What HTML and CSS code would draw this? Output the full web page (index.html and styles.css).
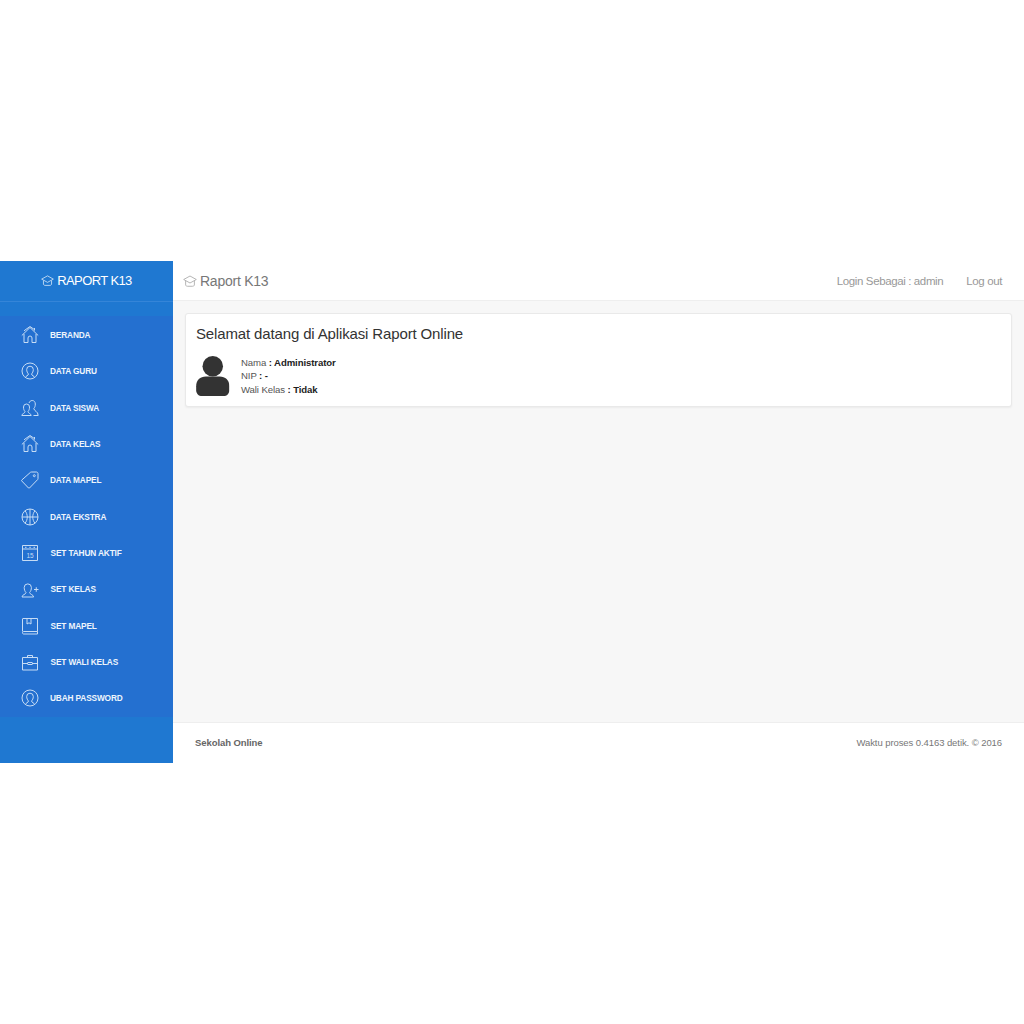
FILE: index.html
```html
<!DOCTYPE html>
<html lang="id">
<head>
<meta charset="utf-8">
<title>Raport K13</title>
<link rel="stylesheet" href="styles.css">
</head>
<body>
<svg class="defs" width="0" height="0" aria-hidden="true">
  <defs>
    <symbol id="cap" viewBox="0 0 16 16"><path d="M.8 6.300 8 2.300 15.200 6.300 8 10.300Z"/><path d="M3 8v4.500c0 .8 1 1.500 2 1.500h6c1 0 2-.7 2-1.500V8"/></symbol>
    <symbol id="home" viewBox="0 0 18 18"><path d="M.8 9.500 9 1.500l8.200 8"/><path d="M3 4.800 9 .5l5 3.500M13.500 2v2.500"/><path d="M3 8v8.500h4v-4.500a2 2 0 0 1 4 0v4.500h4V8"/></symbol>
    <symbol id="user" viewBox="0 0 18 18"><circle cx="9" cy="9" r="8"/><path d="M4.500 15.500c0-1.500 3-2 3-3.500-1-1-1.800-2.500-1.800-4.500a3.300 3.300 0 0 1 6.600 0c0 2-.8 3.500-1.800 4.500 0 1.500 3 2 3 3.500"/></symbol>
    <symbol id="users" viewBox="0 0 18 18"><path d="M.8 16.500c0-2 3.200-2 3.200-4-1-1-1.500-2.500-1.500-4.500a3 3 0 0 1 6 0c0 2-.5 3.500-1.500 4.500 0 2 3.200 2 3.200 4Z"/><path d="M8 4c.5-1.500 1.700-2.500 3.200-2.500 1.900 0 3.100 1.500 3.100 3.500s-.5 3.500-1.500 4.500c0 2.500 4.400 2.700 4.400 7h-4.700"/></symbol>
    <symbol id="tag" viewBox="0 0 18 18"><path d="M.8 10c-.3-.3-.3-.7 0-1L9.500 1.300c.3-.3.500-.3.800-.3h5.200c.8 0 1.500.7 1.500 1.500v5.200c0 .3 0 .5-.3.800L8.500 17c-.3.300-.7.300-1 0Z"/><circle cx="13.300" cy="4.700" r="1"/></symbol>
    <symbol id="ball" viewBox="0 0 18 18"><circle cx="9" cy="9" r="8"/><path d="M1 9h16M9 1v16M4 2.800C7 6 7 12 4 15.200M14 2.800C11 6 11 12 14 15.200"/></symbol>
    <symbol id="cal" viewBox="0 0 18 18"><path d="M1.500 1.500h15v15h-15ZM1.500 5h15"/><path d="M4 3.300h1.500M8.300 3.300h1.500M12.500 3.300h1.500"/><text x="9" y="13.800" text-anchor="middle" class="cal-num">15</text></symbol>
    <symbol id="addu" viewBox="0 0 18 18"><path d="M1 17c0-2.500 4-2.500 4-4.500-1.200-1.200-1.800-3-1.800-5a3.600 3.600 0 0 1 7.200 0c0 2-.6 3.800-1.800 5 0 2 4 2 4 4.500Z"/><path d="M13 9.500h4.500M15.250 7.250v4.500"/></symbol>
    <symbol id="book" viewBox="0 0 18 18"><path d="M1.500 14.500V2c0-.3.200-.5.500-.5h14.500v13H2.500c-1.300 0-1.300 2.500 0 2.500h14v-2.500"/><path d="M6 1.500v5.500l2-1.200 2 1.200V1.500"/></symbol>
    <symbol id="case" viewBox="0 0 18 18"><path d="M1.500 4.500h15v12.500h-15ZM1.500 10.500h5.500M11 10.500h5.500M6.500 4.500V2.500h5v2"/><rect x="7" y="9.500" width="4" height="2"/></symbol>
    <symbol id="person" viewBox="0 0 34 41"><circle cx="17" cy="10.500" r="10.500"/><path d="M0 31c0-6.500 4-10 10-10h14c6 0 10 3.500 10 10v4c0 3.500-2.500 6-6 6H6c-3.500 0-6-2.500-6-6Z"/></symbol>
  </defs>
</svg>
<div class="app">
  <aside class="sidebar">
    <div class="brand"><svg class="brand-icon"><use href="#cap"/></svg><span>RAPORT K13</span></div>
    <nav class="menu">
      <a class="item"><svg class="ic"><use href="#home"/></svg><span>BERANDA</span></a>
      <a class="item"><svg class="ic"><use href="#user"/></svg><span>DATA GURU</span></a>
      <a class="item"><svg class="ic"><use href="#users"/></svg><span>DATA SISWA</span></a>
      <a class="item"><svg class="ic"><use href="#home"/></svg><span>DATA KELAS</span></a>
      <a class="item"><svg class="ic"><use href="#tag"/></svg><span>DATA MAPEL</span></a>
      <a class="item"><svg class="ic"><use href="#ball"/></svg><span>DATA EKSTRA</span></a>
      <a class="item set"><svg class="ic"><use href="#cal"/></svg><span>SET TAHUN AKTIF</span></a>
      <a class="item set"><svg class="ic"><use href="#addu"/></svg><span>SET KELAS</span></a>
      <a class="item set"><svg class="ic"><use href="#book"/></svg><span>SET MAPEL</span></a>
      <a class="item set"><svg class="ic"><use href="#case"/></svg><span>SET WALI KELAS</span></a>
      <a class="item"><svg class="ic"><use href="#user"/></svg><span>UBAH PASSWORD</span></a>
    </nav>
  </aside>
  <div class="main">
    <header class="topbar">
      <div class="title"><svg class="title-icon"><use href="#cap"/></svg><span>Raport K13</span></div>
      <div class="top-links"><span>Login Sebagai : admin</span><span>Log out</span></div>
    </header>
    <main class="content">
      <section class="card">
        <h1>Selamat datang di Aplikasi Raport Online</h1>
        <div class="profile">
          <svg class="avatar"><use href="#person"/></svg>
          <div class="info">
            <div>Nama <b>: Administrator</b></div>
            <div>NIP <b>: -</b></div>
            <div>Wali Kelas <b>: Tidak</b></div>
          </div>
        </div>
      </section>
    </main>
    <footer class="footer"><b>Sekolah Online</b><span>Waktu proses 0.4163 detik. © 2016</span></footer>
  </div>
</div>
</body>
</html>
```
FILE: styles.css
```css
* { box-sizing: border-box; }
html, body { margin: 0; background: #fff; }
body { padding-top: 261px; font-family: "Liberation Sans", Arial, sans-serif; color: #333; }
.defs { display: block; height: 0; }
.app { display: flex; height: 502px; }
.sidebar { width: 173px; flex: none; background: #1f78d1; color: #fff; }
.brand { height: 41px; border-bottom: 1px solid #3585d8; display: flex; align-items: center; justify-content: center; gap: 3px; font-size: 13px; letter-spacing: -.6px; padding-bottom: 2px; }
.brand-icon { width: 13px; height: 13px; fill: none; stroke: #d5e6f7; stroke-width: 1; }
.menu { margin-top: 14px; background: #2470d0; height: 401px; padding-top: 1px; }
.item { height: 36.3px; display: flex; align-items: center; color: #eef5fc; font-size: 8.300px; letter-spacing: -.15px; font-weight: 700; padding-left: 21px; gap: 11px; }
.item.set { gap: 11.6px; }
.ic { width: 18px; height: 18px; flex: none; fill: none; stroke: #c6dcf5; stroke-width: 1; }
.cal-num { fill: #c6dcf5; stroke: none; font-size: 6.500px; font-weight: 400; letter-spacing: 0; }
.main { flex: 1; display: flex; flex-direction: column; min-width: 0; background: #f7f7f7; }
.topbar { height: 40px; background: #fff; border-bottom: 1px solid #eee; display: flex; justify-content: space-between; align-items: center; padding: 0 22px 0 10px; }
.title { display: flex; align-items: center; gap: 3px; font-size: 14px; letter-spacing: -.25px; color: #777; padding-top: 1px; }
.title-icon { width: 14px; height: 14px; fill: none; stroke: #aaa; stroke-width: 1; }
.top-links { display: flex; gap: 23px; font-size: 11.500px; letter-spacing: -.38px; color: #999; }
.content { flex: 1; padding: 12px 12px 0; }
.card { height: 94px; background: #fff; border: 1px solid #e9e9e9; border-radius: 3px; padding: 10px; box-shadow: 0 1px 2px rgba(0,0,0,.05); }
h1 { margin: 0; font-size: 15px; letter-spacing: -.14px; font-weight: 400; line-height: 19px; color: #333; }
.profile { display: flex; gap: 11.500px; margin-top: 13px; }
.avatar { width: 33.500px; height: 40px; flex: none; fill: #333; }
.info { font-size: 9.600px; letter-spacing: -.1px; line-height: 13.300px; color: #555; }
.info b { color: #222; }
.footer { height: 41px; background: #fff; border-top: 1px solid #eee; display: flex; justify-content: space-between; align-items: center; padding: 0 22px 1px; font-size: 9.500px; letter-spacing: -.08px; color: #777; }
.footer b { color: #666; }
```
